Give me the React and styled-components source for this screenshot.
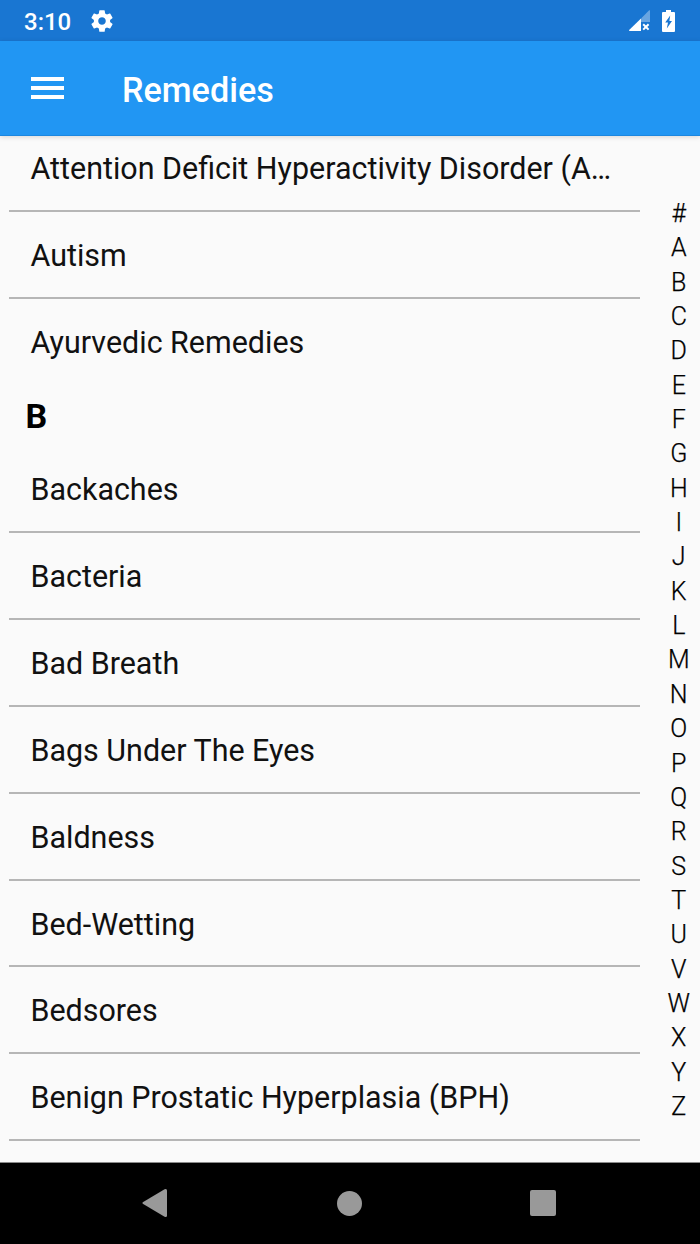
import React from 'react'
import styled, { createGlobalStyle } from 'styled-components'

const sections = [
    {
        letter: null,
        items: [
            'Attention Deficit Hyperactivity Disorder (A…',
            'Autism',
            'Ayurvedic Remedies',
        ],
    },
    {
        letter: 'B',
        items: [
            'Backaches',
            'Bacteria',
            'Bad Breath',
            'Bags Under The Eyes',
            'Baldness',
            'Bed-Wetting',
            'Bedsores',
            'Benign Prostatic Hyperplasia (BPH)',
        ],
    },
]

const letters = '#ABCDEFGHIJKLMNOPQRSTUVWXYZ'.split('')

const App = () => {
    return (
        <Screen>
            <GlobalStyle />
            <StatusBar>
                <Time>3:10</Time>
                <svg width="26" height="26" viewBox="0 0 24 24" fill="#fff">
                    <path d="M19.43 12.98c.04-.32.07-.64.07-.98s-.03-.66-.07-.98l2.11-1.65c.19-.15.24-.42.12-.64l-2-3.46c-.12-.22-.39-.3-.61-.22l-2.49 1c-.52-.4-1.08-.73-1.69-.98l-.38-2.65C14.46 2.18 14.25 2 14 2h-4c-.25 0-.46.18-.49.42l-.38 2.65c-.61.25-1.17.59-1.69.98l-2.49-1c-.23-.09-.49 0-.61.22l-2 3.46c-.13.22-.07.49.12.64l2.11 1.65c-.04.32-.07.65-.07.98s.03.66.07.98l-2.11 1.65c-.19.15-.24.42-.12.64l2 3.46c.12.22.39.3.61.22l2.49-1c.52.4 1.08.73 1.69.98l.38 2.65c.03.24.24.42.49.42h4c.25 0 .46-.18.49-.42l.38-2.65c.61-.25 1.17-.59 1.69-.98l2.49 1c.23.09.49 0 .61-.22l2-3.46c.12-.22.07-.49-.12-.64l-2.11-1.65zM12 15.5c-1.93 0-3.5-1.57-3.5-3.5s1.57-3.5 3.5-3.5 3.5 1.57 3.5 3.5-1.57 3.5-3.5 3.5z" />
                </svg>
                <Indicators>
                    <svg width="22" height="22" viewBox="0 0 22 22">
                        <path d="M20.2 .3Q21 -.2 21 .8V12H12V8.5Z" fill="#fff" opacity=".35" />
                        <path d="M12 8.5V21H.8Q-.6 20.8 .4 19.8Z" fill="#fff" />
                        <path d="M14.2 14.2L19.6 19.6M19.6 14.2L14.2 19.6" stroke="#fff" strokeWidth="2" />
                    </svg>
                    <svg width="13" height="22" viewBox="0 0 13 22">
                        <path d="M4 0H9V2H12Q13 2 13 3V21Q13 22 12 22H1Q0 22 0 21V3Q0 2 1 2H4Z" fill="#fff" />
                        <path d="M8.2 5.6L3.2 12.6H6L4.8 18.4L10 11H7.4Z" fill="#1976d2" />
                    </svg>
                </Indicators>
            </StatusBar>
            <AppBar>
                <MenuButton aria-label="Menu">
                    <span />
                    <span />
                    <span />
                </MenuButton>
                <Title>Remedies</Title>
            </AppBar>
            <Content>
                <List>
                    {sections.map((section, i) => (
                        <Section key={i}>
                            {section.letter && <SectionHeader>{section.letter}</SectionHeader>}
                            <Rows>
                                {section.items.map(item => (
                                    <Row key={item}>{item}</Row>
                                ))}
                            </Rows>
                        </Section>
                    ))}
                </List>
                <LetterIndex>
                    {letters.map(letter => (
                        <Letter key={letter}>{letter}</Letter>
                    ))}
                </LetterIndex>
            </Content>
            <NavBar>
                <svg width="26" height="28" viewBox="0 0 26 28">
                    <path d="M1.2 13L22.6.3Q25 -.6 25 1.6V26.4Q25 28.6 22.6 27.7L1.2 15Q-.4 14 1.2 13Z" fill="#999" />
                </svg>
                <Home />
                <Recents />
            </NavBar>
        </Screen>
    )
}

const GlobalStyle = createGlobalStyle`
    * {
        box-sizing: border-box;
    }

    body {
        margin: 0;
        font-family: Roboto, sans-serif;
        color: #111;
    }
`

const Screen = styled.div`
    display: flex;
    flex-direction: column;
    height: 1244px;
    overflow: hidden;
    background: #fafafa;
`

const StatusBar = styled.div`
    display: flex;
    align-items: center;
    flex: none;
    height: 41px;
    padding: 0 25px 0 24px;
    background: #1976d2;
`

const Time = styled.span`
    width: 65px;
    padding-top: 2px;
    font-size: 24px;
    line-height: 28px;
    font-weight: 500;
    color: #fff;
`

const Indicators = styled.div`
    display: flex;
    gap: 11px;
    margin-left: auto;
`

const AppBar = styled.header`
    position: relative;
    display: flex;
    align-items: center;
    flex: none;
    height: 95px;
    padding-left: 31px;
    background: #2196f3;
    border-bottom: 1px solid #1b87e0;
    box-shadow: 0 1px 5px rgba(0, 0, 0, 0.15);
`

const MenuButton = styled.button`
    display: flex;
    flex-direction: column;
    gap: 5px;
    width: 33px;
    margin: 0 58px 0 0;
    padding: 0;
    border: 0;
    background: none;

    span {
        height: 4px;
        background: #fff;
    }
`

const Title = styled.h1`
    margin: 0;
    padding-top: 3px;
    font-size: 34.2px;
    line-height: 40px;
    font-weight: 500;
    color: #fff;
`

const Content = styled.main`
    display: flex;
    flex: 1;
    min-height: 0;
    overflow: hidden;
`

const List = styled.ul`
    width: 640px;
    margin: -11px 0 0;
    padding: 0 0 0 9px;
    list-style: none;
`

const Rows = styled.ul`
    margin: 0;
    padding: 0;
    list-style: none;
`

const Row = styled.li`
    height: 86.83px;
    padding: 0 0 0 21.5px;
    border-bottom: 2px solid #b6b6b6;
    font-size: 30.45px;
    line-height: 88.6px;
    white-space: nowrap;
`

const Section = styled.li`
    &:not(:last-child) ${Row}:last-child {
        border-color: transparent;
    }
`

const SectionHeader = styled.h2`
    height: 61px;
    margin: 0;
    padding-left: 16.5px;
    font-size: 34px;
    line-height: 63px;
    font-weight: 700;
    color: #000;
`

const LetterIndex = styled.nav`
    width: 42.5px;
    margin-left: auto;
    padding-top: 61px;
`

const Letter = styled.div`
    height: 34.35px;
    font-size: 25px;
    line-height: 34.35px;
    font-weight: 300;
    text-align: center;
    color: #000;
    -webkit-text-stroke: 0.25px #000;
`

const NavBar = styled.footer`
    display: flex;
    align-items: center;
    justify-content: space-between;
    flex: none;
    height: 82px;
    padding: 0 144px 1px 142px;
    border-top: 1px solid #8a8a8a;
    background: #000;
`

const Home = styled.div`
    width: 25px;
    height: 25px;
    border-radius: 50%;
    background: #999;
`

const Recents = styled.div`
    width: 26px;
    height: 26px;
    border-radius: 2px;
    background: #999;
`

export default App
